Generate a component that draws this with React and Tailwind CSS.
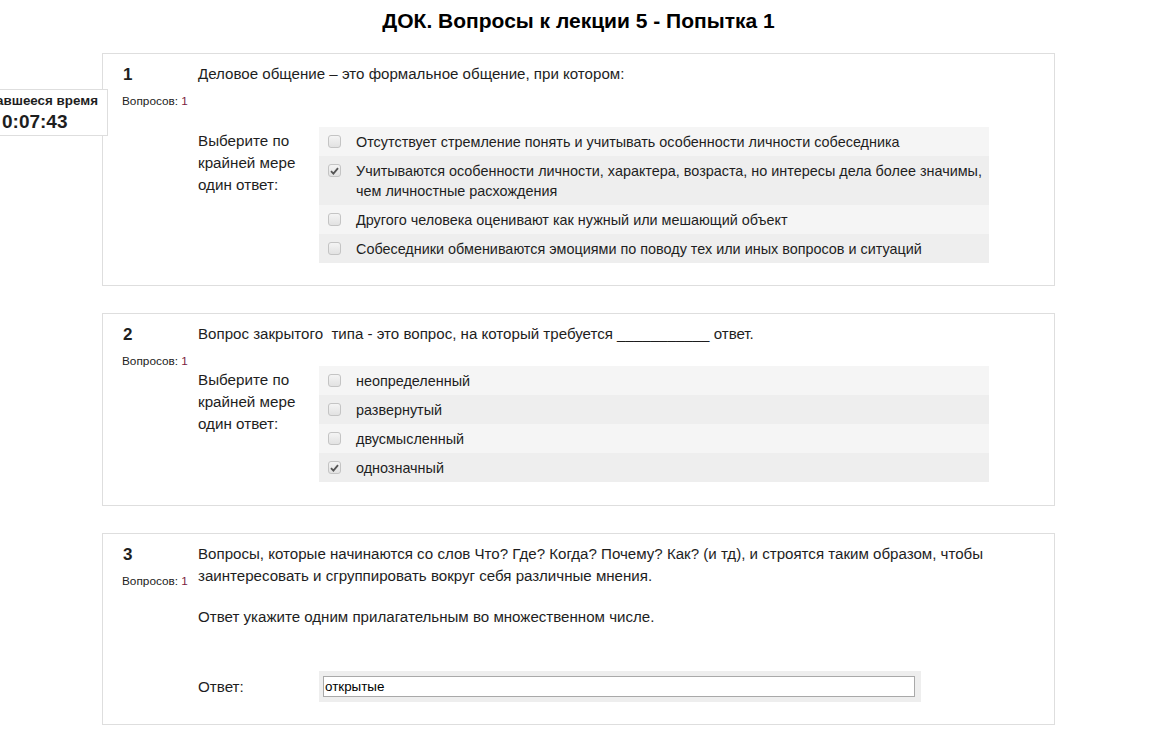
import React from "react";

const font = { fontFamily: '"Liberation Sans", Arial, sans-serif' };

function Box({ checked }) {
  return (
    <span className="flex items-center justify-center w-[13px] h-[13px] shrink-0 rounded-[3px] border border-[#c4c4c4] bg-gradient-to-b from-[#f4f4f4] to-[#e2e2e2] mt-[3.5px]">
      {checked && (
        <svg width="9" height="8" viewBox="0 0 9 8">
          <path d="M1 4.2 L3.4 6.6 L8 1.2" fill="none" stroke="#555" strokeWidth="1.8" />
        </svg>
      )}
    </span>
  );
}

function Options({ items }) {
  return (
    <div className="w-[670px] text-[14.4px]">
      {items.map((it, i) => (
        <div
          key={i}
          className={`flex gap-[15px] pl-[9px] pr-[1px] py-[4.5px] leading-[20px] ${i % 2 ? "bg-[#eeeeee]" : "bg-[#f5f5f5]"}`}
        >
          <Box checked={it.checked} />
          <span>{it.text}</span>
        </div>
      ))}
    </div>
  );
}

function Prompt() {
  return (
    <div className="w-[121px] shrink-0 pr-[10px] pt-[3px] text-[15.2px] leading-[22px]">
      Выберите по крайней мере один ответ:
    </div>
  );
}

function Card({ n, children }) {
  return (
    <section className="flex border border-[#dedede] bg-white pt-[9px] pl-[19px]">
      <div className="w-[76px] shrink-0">
        <div className="text-[17px] font-bold leading-[22px] pl-[1px] pt-[1px]">{n}</div>
        <div className="text-[11.8px] leading-[13px] mt-[9px] text-[#222]">
          Вопросов: <span className="text-[#7b1f43]">1</span>
        </div>
      </div>
      <div className="flex-1 pr-[30px] text-[15.1px]">{children}</div>
    </section>
  );
}

export default function App() {
  return (
    <div className="relative min-h-[739px] bg-white text-[14px] text-[#1e1e1e]" style={font}>
      {/* timer block sticks out past the left edge */}
      <div className="absolute left-[-42px] top-[89px] z-10 w-[150px] h-[47px] border border-[#dedede] bg-white pt-[3px]">
        <div className="text-[13.4px] font-bold leading-[15px] text-right pr-[9px] whitespace-nowrap">Оставшееся время</div>
        <div className="text-[19px] font-bold leading-[23px] mt-[2px] pl-[43px]">0:07:43</div>
      </div>

      <div className="ml-[102px] w-[953px]">
        <h1 className="h-[53px] pt-[8px] text-center text-[21px] font-bold leading-[26px] text-black">
          ДОК. Вопросы к лекции 5 - Попытка 1
        </h1>

        <div className="flex flex-col gap-[27px]">
          <Card n="1">
            <p className="leading-[22px]">Деловое общение – это формальное общение, при котором:</p>
            <div className="flex mt-[42px] pb-[22px]">
              <Prompt />
              <Options
                items={[
                  { text: "Отсутствует стремление понять и учитывать особенности личности собеседника" },
                  {
                    text: "Учитываются особенности личности, характера, возраста, но интересы дела более значимы, чем личностные расхождения",
                    checked: true,
                  },
                  { text: "Другого человека оценивают как нужный или мешающий объект" },
                  { text: "Собеседники обмениваются эмоциями по поводу тех или иных вопросов и ситуаций" },
                ]}
              />
            </div>
          </Card>

          <Card n="2">
            <p className="leading-[22px] whitespace-pre">
              Вопрос закрытого  типа - это вопрос, на который требуется ___________ ответ.
            </p>
            <div className="flex mt-[21px] pb-[23px]">
              <Prompt />
              <Options
                items={[
                  { text: "неопределенный" },
                  { text: "развернутый" },
                  { text: "двусмысленный" },
                  { text: "однозначный", checked: true },
                ]}
              />
            </div>
          </Card>

          <Card n="3">
            <p className="leading-[22px] w-[800px]">
              Вопросы, которые начинаются со слов Что? Где? Когда? Почему? Как? (и тд), и строятся таким образом, чтобы
              заинтересовать и сгруппировать вокруг себя различные мнения.
            </p>
            <p className="leading-[22px] mt-[19px]">Ответ укажите одним прилагательным во множественном числе.</p>
            <div className="flex items-center mt-[43px] pb-[22px]">
              <div className="w-[121px] shrink-0 leading-[22px] text-[15.2px]">Ответ:</div>
              <div className="w-[602px] bg-[#eeeeee] py-[5px] pl-[4px]">
                <div className="w-[592px] h-[21px] border border-[#a9a9a9] bg-white px-[1px] text-[13.4px] leading-[19px] text-black">
                  открытые
                </div>
              </div>
            </div>
          </Card>
        </div>
      </div>
    </div>
  );
}
